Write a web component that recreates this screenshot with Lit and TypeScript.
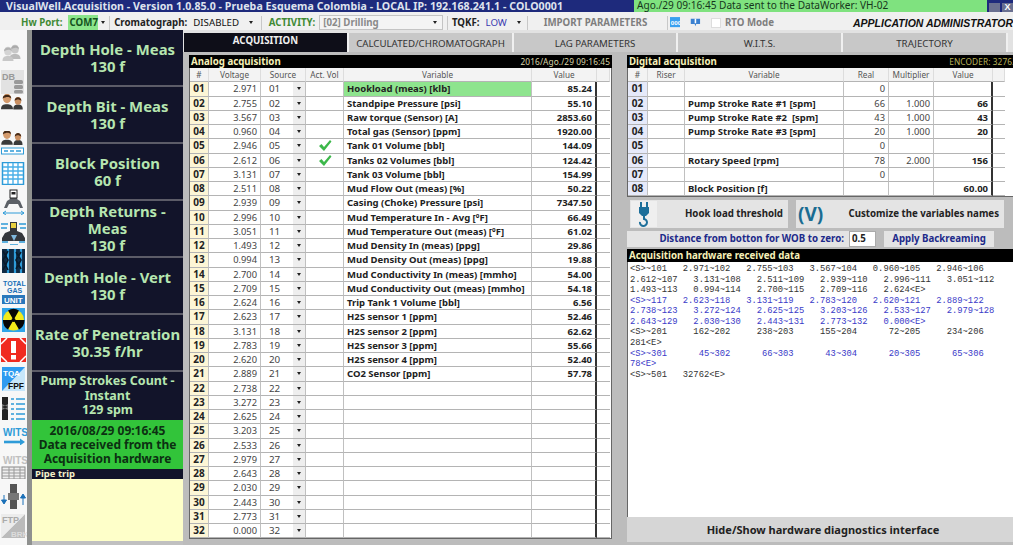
import { LitElement, html, css, svg } from "lit";
import { customElement } from "lit/decorators.js";

const analog: [string, string, boolean][] = [
  ["2.971", "Hookload (meas) [klb]", false], ["2.755", "Standpipe Pressure [psi]", false], ["3.567", "Raw torque (Sensor) [A]", false],
  ["0.960", "Total gas (Sensor) [ppm]", false], ["2.946", "Tank 01 Volume [bbl]", true], ["2.612", "Tanks 02 Volumes [bbl]", true],
  ["3.131", "Tank 03 Volume [bbl]", false], ["2.511", "Mud Flow Out (meas) [%]", false], ["2.939", "Casing (Choke) Pressure [psi]", false],
  ["2.996", "Mud Temperature In - Avg [ºF]", false], ["3.051", "Mud Temperature Out (meas) [ºF]", false], ["1.493", "Mud Density In (meas) [ppg]", false],
  ["0.994", "Mud Density Out (meas) [ppg]", false], ["2.700", "Mud Conductivity In (meas) [mmho]", false], ["2.709", "Mud Conductivity Out (meas) [mmho]", false],
  ["2.624", "Trip Tank 1 Volume [bbl]", false], ["2.623", "H2S sensor 1 [ppm]", false], ["3.131", "H2S sensor 2 [ppm]", false],
  ["2.783", "H2S sensor 3 [ppm]", false], ["2.620", "H2S sensor 4 [ppm]", false], ["2.889", "CO2 Sensor [ppm]", false],
  ["2.738", "", false], ["3.272", "", false], ["2.625", "", false], ["3.203", "", false], ["2.533", "", false], ["2.979", "", false],
  ["2.643", "", false], ["2.030", "", false], ["2.443", "", false], ["2.773", "", false], ["0.000", "", false],
];
const analogValues = ["85.24", "55.10", "2853.60", "1920.00", "144.09", "124.42", "154.99", "50.22", "7347.50", "66.49", "61.02", "29.86", "19.88", "54.00", "54.18", "6.56", "52.46", "62.62", "55.66", "52.40", "57.78"];
const digital = [
  ["01", "", "0", "", ""], ["02", "Pump Stroke Rate #1 [spm]", "66", "1.000", "66"], ["03", "Pump Stroke Rate #2  [spm]", "43", "1.000", "43"],
  ["04", "Pump Stroke Rate #3 [spm]", "20", "1.000", "20"], ["05", "", "0", "", ""], ["06", "Rotary Speed [rpm]", "78", "2.000", "156"],
  ["07", "", "0", "", ""], ["08", "Block Position [f]", "", "", "60.00"],
];
const tiles = [
  { lines: ["Depth Hole - Meas", "130 f"], h: 57 },
  { lines: ["Depth Bit - Meas", "130 f"], h: 57 },
  { lines: ["Block Position", "60 f"], h: 57 },
  { lines: ["Depth Returns -", "Meas", "130 f"], h: 57 },
  { lines: ["Depth Hole - Vert", "130 f"], h: 57 },
  { lines: ["Rate of Penetration", "30.35 f/hr"], h: 57 },
];
const raw: [string, boolean][] = [
  ["<S>~101   2.971~102   2.755~103   3.567~104   0.960~105   2.946~106", false],
  ["2.612~107   3.131~108   2.511~109   2.939~110   2.996~111   3.051~112", false],
  ["1.493~113   0.994~114   2.700~115   2.709~116   2.624<E>", false],
  ["<S>~117   2.623~118   3.131~119   2.783~120   2.620~121   2.889~122", true],
  ["2.738~123   3.272~124   2.625~125   3.203~126   2.533~127   2.979~128", true],
  ["2.643~129   2.030~130   2.443~131   2.773~132   0.000<E>", true],
  ["<S>~201     162~202     238~203     155~204      72~205     234~206", false],
  ["281<E>", false],
  ["<S>~301      45~302      66~303      43~304      20~305      65~306", true],
  ["78<E>", true],
  ["<S>~501   32762<E>", false],
];

const person = (x: number, y: number, s: number, skin: string, hair: string, body: string) => svg`
  <path d="M${x - 5 * s} ${y + 11 * s}c0-4 2-5 ${5 * s}-5c3 0 ${5 * s} 1 ${5 * s} 5z" fill=${body}/>
  <ellipse cx=${x} cy=${y + 2 * s} rx=${3.4 * s} ry=${4 * s} fill=${skin}/>
  <path d="M${x - 3.6 * s} ${y + 2 * s}c0-5 ${7.2 * s}-5 ${7.2 * s} 0c-2-2-5-2-${7.2 * s} 0z" fill=${hair}/>`;
const rig = svg`
  <path d="M4 19l3-7 3-2v-2h7v2l3 2 3 7h-3l-2-4h-9l-2 4z" fill="#5c6066"/>
  <rect x="10" y="1" width="7" height="8" fill="#fff" stroke="#222"/><rect x="11.5" y="3" width="4" height="2.5" fill="#222"/>`;
const label = (x: number, y: number, t: string, fill: string, size = 8) =>
  svg`<text x=${x} y=${y} fill=${fill} font-size=${size} font-weight="700" font-family="Liberation Sans, sans-serif">${t}</text>`;

const icons: { top: number; h: number; body: unknown }[] = [
  { top: 14, h: 20, body: svg`${person(15, 3, 1.1, "#c8c8c8", "#aaa", "#bbb")}${person(8, 5, 1.1, "#d4d4d4", "#b0b0b0", "#c8c8c8")}` },
  { top: 6, h: 24, body: svg`<rect x="1" y="0" width="23" height="24" fill="#e2e2e2"/>${label(2, 10, "DB", "#999", 9)}<rect x="14" y="10" width="9" height="4" rx="1.5" fill="#999"/><rect x="14" y="15" width="9" height="4" rx="1.5" fill="#999"/><rect x="14" y="20" width="9" height="3.5" rx="1.5" fill="#999"/>` },
  { top: 0, h: 17, body: svg`${person(18, 5, 0.95, "#c98f62", "#4a2c18", "#3a3a3a")}${person(7, 2, 1.2, "#d39a6c", "#3f2615", "#3a3a3a")}` },
  { top: 20, h: 24, body: svg`${person(18, 4, 0.9, "#c98f62", "#4a2c18", "#3a3a3a")}${person(7, 1, 1.15, "#d39a6c", "#3f2615", "#3a3a3a")}<rect x="1.5" y="17" width="22" height="6" fill="#fff" stroke="#2e9bd8"/><path d="M4 20h4M10 20h4M16 20h5" stroke="#2e9bd8" stroke-width="1.5"/>` },
  { top: 7, h: 23, body: svg`<rect x="2.5" y="0.5" width="21" height="22" fill="#fff" stroke="#2e9bd8" stroke-width="1.5"/><path d="M3 5h20M3 9h20M3 13h20M3 17h20M8 1v21M13 1v21M18 1v21" stroke="#4ab0e8" stroke-width="1.4"/>` },
  { top: 4, h: 26, body: svg`${rig}<path d="M3 24h21M3 24l3-2M3 24l3 2M24 24l-3-2M24 24l-3 2" stroke="#2e9bd8" stroke-width="1"/>` },
  { top: 5, h: 25, body: svg`<path d="M1 4h7M19 4h7M1 8h6M20 8h6M2 22h6M19 22h6M10 25h8" stroke="#2e9bd8" stroke-width="1.4"/><path d="M2 18l3-5 5-2V2h7v9l5 2 3 5v3H2z" fill="#34373c"/><rect x="11" y="3" width="5" height="5" fill="#e8d040"/><path d="M11 15l3 6 3-6z" fill="#7fb8dc"/>` },
  { top: 4, h: 24, body: svg`<rect x="2" y="0" width="23" height="24" fill="#0f2a44"/><path d="M8 0v24M15 0v24M21 0v24" stroke="#2e9bd8" stroke-width="2.2"/><path d="M3 2l5 9-5 10M8 2l-5 9 5 10M16 3l5 8-5 9M21 3l-5 8 5 9" stroke="#0a1a2a" stroke-width="1.6" fill="none"/>` },
  { top: 6, h: 25, body: svg`${label(3, 7, "TOTAL", "#1a70b8", 7)}${label(7, 14, "GAS", "#1a70b8", 7)}<rect x="2" y="16" width="23" height="9" fill="#2a78bc"/>${label(4, 24, "UNIT", "#fff", 8)}` },
  { top: 4, h: 24, body: svg`<rect x="2" y="0" width="23" height="24" fill="#2fa4e8"/><circle cx="13.5" cy="12" r="10.5" fill="#f2ea1a"/><path d="M13.5 12L8 2.5A10.5 10.5 0 0 1 19 2.5zM13.5 12H24.5A10.5 10.5 0 0 1 19 21.5zM13.5 12L8 21.5A10.5 10.5 0 0 1 3 12z" fill="#050505"/><circle cx="13.5" cy="12" r="2" fill="#050505"/>` },
  { top: 6, h: 24, body: svg`<path d="M1 0h25v24H1z" fill="#f02a20"/><path d="M1 6l6-6M26 6l-6-6M1 18l6 6M26 18l-6 6" stroke="#fff" stroke-width="1.5"/><rect x="11" y="3" width="5" height="12" fill="#fff"/><rect x="11" y="17" width="5" height="4.5" fill="#fff"/>` },
  { top: 5, h: 24, body: svg`<rect x="2" y="0" width="23" height="24" fill="#c6e6fa"/><path d="M2 0h23L2 24z" fill="#2e9bf0"/>${label(3, 9, "TQA", "#fff", 8)}${label(8, 22, "FPF", "#111", 8.5)}` },
  { top: 6, h: 23, body: svg`<rect x="2" y="0" width="6" height="23" fill="#222"/><path d="M2 7l6 3-6 3zM8 7l-6 3 6 3z" fill="#777"/><path d="M11 2h3M16 2h9M11 7h3M16 7h9M11 12h3M16 12h9M11 17h3M16 17h9M11 22h3M16 22h9" stroke="#2e9bd8" stroke-width="1.5"/>` },
  { top: 7, h: 18, body: svg`${label(3, 9, "WITS", "#2e9bd8", 10)}<path d="M4 15h17" stroke="#2e9bd8" stroke-width="2.6"/><path d="M20 11.5l5 3.5-5 3.5z" fill="#2e9bd8"/>` },
  { top: 10, h: 24, body: svg`${label(3, 9, "WITS", "#c0c0c0", 10)}<rect x="2" y="12" width="23" height="12" fill="#eee" stroke="#888"/><path d="M2 15h23M2 18h23M2 21h23M9 12v12M14 12v12M20 12v12" stroke="#999"/>` },
  { top: 5, h: 25, body: svg`<rect x="10" y="0" width="7" height="25" fill="#555"/><rect x="8" y="9" width="11" height="7" fill="#777"/><path d="M4 11v8M1.5 16L4 20l2.500-4z" stroke="#1a70b8" fill="#1a70b8"/><path d="M23 21v-8M20.500 14l2.500-4 2.500 4z" stroke="#1a70b8" fill="#1a70b8"/>` },
  { top: 5, h: 24, body: svg`<path d="M1 24L25 0v24z" fill="#bbb"/><path d="M1 0h24L1 24z" fill="#ececec"/>${label(2, 9, "FTP", "#aaa", 9)}${label(11, 23, "BRK", "#ddd", 8)}` },
];

@customElement("app-root")
export class AppRoot extends LitElement {
  static styles = css`
    :host { display: block; width: 1013px; height: 545px; overflow: hidden; background: #c0c0c0; font-family: "Open Sans", "Noto Sans", sans-serif; color: #222; position: relative; }
    * { box-sizing: border-box; }
    .title { height: 12px; background: #1e2a7c; color: #dfe3ee; font: 700 10.6px/12px "Noto Sans", sans-serif; padding-left: 6px; white-space: pre; letter-spacing: 0.06px; }
    .notice { position: absolute; left: 634px; top: 0; width: 353px; height: 15px; background: #7fe27f; color: #16361c; font: 10.1px/11px "Noto Sans", sans-serif; padding-left: 3px; white-space: pre; }
    .winbtns { position: absolute; left: 989px; top: 3px; display: flex; gap: 2px; }
    .winbtns span { width: 11px; height: 9px; background: #6a7090; color: #fff; font: 700 9px/9px "Liberation Sans", sans-serif; text-align: center; }
    .toolbar { height: 18px; background: #f0f0f0; display: flex; align-items: center; position: relative; white-space: nowrap; font: 700 9.7px/14px "Noto Sans", sans-serif; }
    .tb { display: flex; align-items: center; height: 15px; margin-top: 3px; }
    .sep { width: 1px; height: 14px; background: #c8c8c8; margin-top: 3px; }
    .green { color: #3f8a35; }
    .portbox { background: #8be58b; color: #14521e; height: 15px; width: 35px; padding-left: 2px; margin-left: 5px; }
    .arrow { width: 0; height: 0; border-left: 2.500px solid transparent; border-right: 2.500px solid transparent; border-top: 3px solid #222; display: inline-block; }
    .select { width: 157px; height: 15px; margin-left: 4px; border: 1px solid #c4c4c4; background: #f4f4f4; color: #8a8a8a; padding-left: 3px; line-height: 13px; display: flex; justify-content: space-between; align-items: center; padding-right: 5px; }
    .gray { color: #7e7e7e; }
    .check { width: 10px; height: 10px; background: #fff; border: 1px solid #ddd; }
    .admin { font: italic 700 10.5px/14px "Liberation Sans", sans-serif; color: #111; }
    .body { display: grid; grid-template-columns: 27px 5px 151px 1fr; height: 515px; }
    .side { background: #f7f7f7; }
    .side svg { display: block; width: 27px; }
    .dots { height: 1px; margin: 2px 1px 0; border-top: 1px dotted #999; width: 23px; }
    .strip { background: #8f918f; }
    .tiles { background: #5a5a62; display: flex; flex-direction: column; height: 511px; }
    .tile { background: #12142a; color: #b6e6b0; font: 700 14.900px/17px "Noto Sans", sans-serif; text-align: center; display: flex; flex-direction: column; justify-content: center; border-bottom: 2px solid #5c5c68; }
    .tile.pump { height: 48px; border: none; font-size: 12.500px; line-height: 14.500px; }
    .recv { height: 49px; background: #32c43a; color: #0c3012; font: 700 12px/14px "Noto Sans", sans-serif; text-align: center; display: flex; flex-direction: column; justify-content: center; }
    .trip { height: 10px; background: #12142a; color: #f2efc8; font: 700 9.500px/10px "Noto Sans", sans-serif; padding-left: 3px; overflow: hidden; }
    .note { height: 62px; background: #feffc9; }
    .main { display: flex; flex-direction: column; min-width: 0; }
    .tabs { display: grid; grid-template-columns: 165px 165px 164px 165px 165px; height: 22px; padding: 3px 0 0 1px; column-gap: 0; background: #e2e2e2; }
    .tab { background: #c8c8c8; color: #333; border-right: 2px solid #f0f0f0; font: 9.700px/19px "Noto Sans", sans-serif; text-align: center; padding-top: 1px; }
    .tab.on { background: #0e0e18; color: #eee; font-weight: 700; padding-top: 0; line-height: 16px; }
    .panels { display: grid; grid-template-columns: 423px 392px; column-gap: 15px; padding: 3px 0 0 6px; flex: 1; background: #bcbcbc; }
    .bar { height: 13px; background: #000; color: #f6f0b8; font: 700 9.700px/13px "Noto Sans", sans-serif; padding: 0 2px; display: flex; justify-content: space-between; }
    .bar small { font: 8.300px/13px "Noto Sans", sans-serif; color: #d8d4a8; letter-spacing: 0.1px; }
    .bar small.enc { color: #b9b45a; }
    .table { background: #fff; border: 1px solid #666; border-top: none; }
    .analog .row { display: grid; grid-template-columns: 19px 52px 32px 13px 38px 188px 65px 13px; height: 14.250px; }
    .digital .row { display: grid; grid-template-columns: 20px 37px 159px 45px 45px 59px 12px; height: 14.250px; }
    .row > div { border-right: 1px solid #c0c0c0; border-bottom: 1px solid #b4b4b4; font: 9.300px/13px "Noto Sans", sans-serif; color: #444; padding: 0 3px; overflow: hidden; white-space: pre; }
    .row > div:last-child { border-right: none; }
    .row.head > div { background: #f3f3f3; text-align: center; color: #555; font-size: 8.200px; padding: 0; border-right: 1px solid #ddd; }
    .analog .row > .num { background: #fdf6d6; }
    .digital .row > .num { background: #e6eafa; }
    .row > .num { color: #222; font: 700 10px/13px "Noto Sans", sans-serif; text-align: center; padding: 0; }
    .row > .r { text-align: right; }
    .row > .b { font-weight: 700; color: #222; font-size: 9.500px; }
    .row > .edge { border-right: 2px solid #333; }
    .row > .hl { background: #8ee48e; }
    .row > .src { border-right: none; padding-left: 8px; font-size: 9.800px; }
    .row > .btn { background: #eeeeee; padding: 0; display: flex; align-items: center; justify-content: center; }
    .row > .chk { padding: 0; display: flex; justify-content: center; }
    .row > .chk svg { width: 14px; height: 13px; }
    .actions { display: grid; grid-template-columns: 158px 208px; column-gap: 8px; margin: 3px 0 0 3px; height: 28px; }
    .action { background: #e4e4e4; display: flex; align-items: center; justify-content: space-between; font: 700 9.700px/14px "Noto Sans", sans-serif; color: #222; padding-right: 5px; }
    .action b { color: #1a6c92; font: 700 19px/20px "Noto Sans", sans-serif; padding-left: 2px; }
    .action svg { width: 26px; height: 26px; background: #efefef; margin-left: 1px; }
    .dist { display: grid; grid-template-columns: 222px 27px 118px; column-gap: 0; margin-top: 3px; height: 16px; font: 700 9.700px/16px "Noto Sans", sans-serif; color: #1d2a8a; }
    .dist > .lbl { background: #e4e4e4; text-align: right; padding-right: 5px; }
    .dist > .inp { background: #fff; color: #222; border: 1px solid #aaa; padding-left: 2px; line-height: 13px; }
    .dist > .app { background: #e4e4e4; margin-left: 8px; text-align: center; }
    .rawhead { margin-top: 2px; }
    .raw { height: 255px; background: #fff; border-left: 1px solid #666; border-right: 1px solid #888; padding: 2px 0 0 2px; font: 8.800px/10.530px "Liberation Mono", monospace; color: #333; white-space: pre; }
    .raw .bl { color: #3a3ac8; }
    .hide { height: 25px; background: #d6d6d6; text-align: center; font: 700 11px/25px "Noto Sans", sans-serif; color: #222; }
  `;

  render() {
    const arrow = html`<i class="arrow"></i>`;
    return html`
      <div class="title">VisualWell.Acquisition - Version 1.0.85.0 - Prueba Esquema Colombia - LOCAL IP: 192.168.241.1 - COLO0001</div>
      <div class="notice">Ago./29 09:16:45 Data sent to the DataWorker: VH-02</div>
      <div class="winbtns"><span></span><span>X</span></div>
      <div class="toolbar">
        <div class="tb green" style="margin-left:21px">Hw Port:</div>
        <div class="tb portbox">COM7</div>
        <div class="tb" style="margin-left:3px;width:7px">${arrow}</div>
        <div class="sep" style="margin-left:3px"></div>
        <div class="tb" style="margin-left:4px">Cromatograph:</div>
        <div class="tb" style="margin-left:6px;font-weight:400;color:#111">DISABLED</div>
        <div class="tb" style="margin-left:10px">${arrow}</div>
        <div class="sep" style="margin-left:8px"></div>
        <div class="tb green" style="margin-left:7px">ACTIVITY:</div>
        <div class="tb select" style="margin-top:3px"><span>[02] Drilling</span>${arrow}</div>
        <div class="sep" style="margin-left:4px"></div>
        <div class="tb" style="margin-left:4px">TQKF:</div>
        <div class="tb" style="margin-left:6px;font-weight:400;color:#3b3bb0">LOW</div>
        <div class="tb" style="margin-left:10px">${arrow}</div>
        <div class="sep" style="margin-left:6px"></div>
        <div class="tb gray" style="margin-left:16px">IMPORT PARAMETERS</div>
        <div class="sep" style="margin-left:20px"></div>
        <svg class="tb" style="margin-left:2px" width="13" height="14" viewBox="0 0 13 14"><rect width="13" height="13" fill="#3aa0f0"/><text x="1" y="10" font-size="8" fill="#fff" font-family="Liberation Sans, sans-serif">000</text></svg>
        <svg class="tb" style="margin-left:10px" width="14" height="14" viewBox="0 0 14 14"><path d="M1 2h12v7H8l-1 3-1-3H1z" fill="#3a80d0"/><rect x="6" y="2" width="2" height="6" fill="#fff"/></svg>
        <div class="tb" style="margin-left:10px"><div class="check"></div></div>
        <div class="tb gray" style="margin-left:4px">RTO Mode</div>
        <div class="tb admin" style="margin-left:79px">APPLICATION ADMINISTRATOR</div>
      </div>
      <div class="body">
        <div class="side">
          ${icons.map(
            (i) => html`<svg style="margin-top:${i.top}px;height:${i.h}px" viewBox="0 0 27 ${i.h}">${i.body}</svg>`
          )}
        </div>
        <div class="strip"></div>
        <div class="tiles">
          ${tiles.map((t) => html`<div class="tile" style="height:${t.h}px">${t.lines.map((l) => html`<div>${l}</div>`)}</div>`)}
          <div class="tile pump"><div>Pump Strokes Count -</div><div>Instant</div><div>129 spm</div></div>
          <div class="recv"><div>2016/08/29 09:16:45</div><div>Data received from the</div><div>Acquisition hardware</div></div>
          <div class="trip">Pipe trip</div>
          <div class="note"></div>
        </div>
        <div class="main">
          <div class="tabs">
            <div class="tab on">ACQUISITION</div>
            <div class="tab">CALCULATED/CHROMATOGRAPH</div>
            <div class="tab">LAG PARAMETERS</div>
            <div class="tab">W.I.T.S.</div>
            <div class="tab">TRAJECTORY</div>
          </div>
          <div class="panels">
            <div>
              <div class="bar"><span>Analog acquisition</span><small>2016/Ago./29 09:16:45</small></div>
              <div class="table analog">
                <div class="row head"><div>#</div><div>Voltage</div><div style="grid-column:span 2">Source</div><div>Act. Vol</div><div>Variable</div><div>Value</div><div></div></div>
                ${analog.map(
                  ([v, name, ok], i) => html`<div class="row">
                    <div class="num">${String(i + 1).padStart(2, "0")}</div>
                    <div class="r">${v}</div>
                    <div class="src">${String(i + 1).padStart(2, "0")}</div>
                    <div class="btn">${arrow}</div>
                    <div class="chk">${ok
                      ? html`<svg viewBox="0 0 14 13"><path d="M1 7l2.500-2 2.500 3L12 1l1.500 1.500L6 12z" fill="#3cb84a"/></svg>`
                      : ""}</div>
                    <div class="b ${i === 0 ? "hl" : ""}">${name}</div>
                    <div class="r b edge">${analogValues[i] ?? ""}</div>
                    <div></div>
                  </div>`
                )}
              </div>
            </div>
            <div>
              <div class="bar"><span>Digital acquisition</span><small class="enc">ENCODER: 32762</small></div>
              <div class="table digital">
                <div class="row head"><div>#</div><div>Riser</div><div>Variable</div><div>Real</div><div>Multiplier</div><div>Value</div><div></div></div>
                ${digital.map(
                  ([n, name, real, mult, val]) => html`<div class="row">
                    <div class="num">${n}</div><div></div><div class="b">${name}</div>
                    <div class="r">${real}</div><div class="r">${mult}</div><div class="r b edge">${val}</div><div></div>
                  </div>`
                )}
              </div>
              <div class="actions">
                <div class="action">
                  <svg viewBox="0 0 26 26"><rect x="9" y="1" width="2" height="5" fill="#1d6f9a"/><rect x="15" y="1" width="2" height="5" fill="#1d6f9a"/><path d="M8 6h10v6l-3 3h-4l-3-3z" fill="#1d6f9a"/><path d="M13 15v3a3.500 3.500 0 1 1-4 3" stroke="#1d6f9a" stroke-width="2" fill="none"/></svg>
                  <span>Hook load threshold</span>
                </div>
                <div class="action"><b>(V)</b><span>Customize the variables names</span></div>
              </div>
              <div class="dist">
                <div class="lbl">Distance from botton for WOB to zero:</div>
                <div class="inp">0.5</div>
                <div class="app">Apply Backreaming</div>
              </div>
              <div class="bar rawhead"><span>Acquisition hardware received data</span></div>
              <div class="raw">${raw.map(([t, b]) => html`<div class=${b ? "bl" : ""}>${t}</div>`)}</div>
              <div class="hide">Hide/Show hardware diagnostics interface</div>
            </div>
          </div>
        </div>
      </div>
    `;
  }
}
